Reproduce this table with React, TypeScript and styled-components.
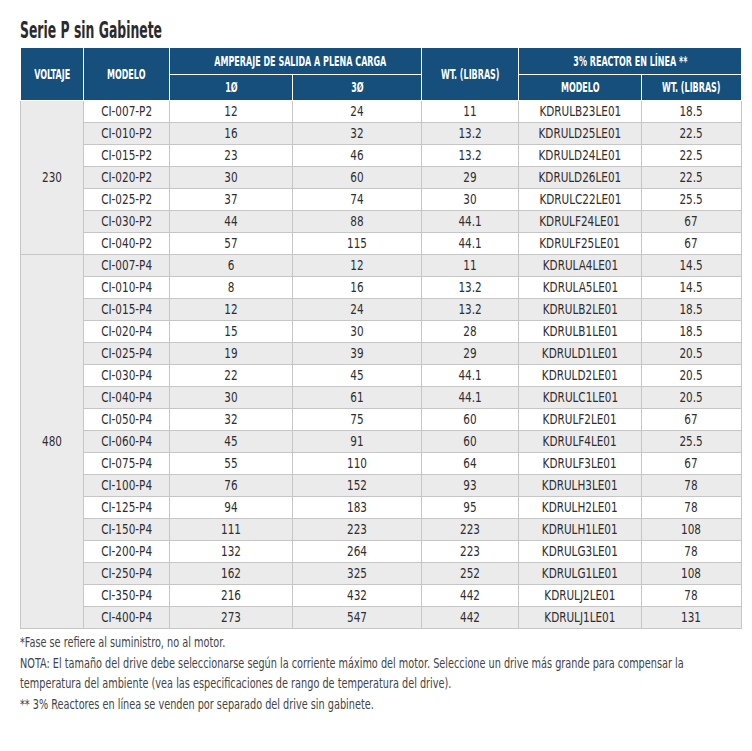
import React from "react";
import styled, { createGlobalStyle } from "styled-components";

const Global = createGlobalStyle`
  html, body { margin: 0; padding: 0; background: #ffffff; }
  body { font-family: "Liberation Sans Narrow", "DejaVu Sans Condensed", "Liberation Sans", sans-serif; color: #333333; }
`;

const Page = styled.div`
  padding: 18px 11px 0 20px;
  width: 721px;
  overflow: hidden;
`;

const Title = styled.h1`
  margin: 0 0 5px 0;
  font-size: 23px;
  line-height: 25px;
  font-weight: 700;
  color: #2b2b2b;
  white-space: nowrap;
`;

/* condensed rendering of the text: the reference uses a narrow face */
const Squeeze = styled.span<{ $x: number; $origin?: string }>`
  display: inline-block;
  white-space: nowrap;
  transform: scaleX(${(p) => p.$x});
  transform-origin: ${(p) => p.$origin ?? "center"};
`;

const Table = styled.table`
  width: 721px;
  border-collapse: collapse;
  table-layout: fixed;
`;

const Th = styled.th`
  background: #164f7b;
  color: #ffffff;
  font-size: 13.5px;
  font-weight: 700;
  height: 26px;
  padding: 0;
  border: 1px solid #ffffff;
  border-top: none;
  text-align: center;
  vertical-align: middle;
  box-sizing: border-box;
  white-space: nowrap;
  &:first-child { border-left: none; }
`;

const Row = styled.tr<{ $shade: boolean }>`
  height: 22px;
  background: ${(p) => (p.$shade ? "#ebebeb" : "#ffffff")};
`;

const Td = styled.td`
  font-size: 14px;
  color: #2e2e2e;
  text-align: center;
  vertical-align: middle;
  padding: 0;
  border: 1px solid #c6c6c6;
  box-sizing: border-box;
  white-space: nowrap;
`;

const VoltCell = styled(Td)`
  background: #ebebeb;
`;

const Notes = styled.div`
  margin-top: 3px;
  width: 852px;
  font-size: 13.5px;
  line-height: 20px;
  color: #444444;
  transform: scaleX(0.8);
  transform-origin: left top;
`;

const Note = styled.p`
  margin: 0 0 1px 0;
`;

type R = [string, string, string, string, string, string];

const g230: R[] = [
  ["CI-007-P2", "12", "24", "11", "KDRULB23LE01", "18.5"],
  ["CI-010-P2", "16", "32", "13.2", "KDRULD25LE01", "22.5"],
  ["CI-015-P2", "23", "46", "13.2", "KDRULD24LE01", "22.5"],
  ["CI-020-P2", "30", "60", "29", "KDRULD26LE01", "22.5"],
  ["CI-025-P2", "37", "74", "30", "KDRULC22LE01", "25.5"],
  ["CI-030-P2", "44", "88", "44.1", "KDRULF24LE01", "67"],
  ["CI-040-P2", "57", "115", "44.1", "KDRULF25LE01", "67"],
];

const g480: R[] = [
  ["CI-007-P4", "6", "12", "11", "KDRULA4LE01", "14.5"],
  ["CI-010-P4", "8", "16", "13.2", "KDRULA5LE01", "14.5"],
  ["CI-015-P4", "12", "24", "13.2", "KDRULB2LE01", "18.5"],
  ["CI-020-P4", "15", "30", "28", "KDRULB1LE01", "18.5"],
  ["CI-025-P4", "19", "39", "29", "KDRULD1LE01", "20.5"],
  ["CI-030-P4", "22", "45", "44.1", "KDRULD2LE01", "20.5"],
  ["CI-040-P4", "30", "61", "44.1", "KDRULC1LE01", "20.5"],
  ["CI-050-P4", "32", "75", "60", "KDRULF2LE01", "67"],
  ["CI-060-P4", "45", "91", "60", "KDRULF4LE01", "25.5"],
  ["CI-075-P4", "55", "110", "64", "KDRULF3LE01", "67"],
  ["CI-100-P4", "76", "152", "93", "KDRULH3LE01", "78"],
  ["CI-125-P4", "94", "183", "95", "KDRULH2LE01", "78"],
  ["CI-150-P4", "111", "223", "223", "KDRULH1LE01", "108"],
  ["CI-200-P4", "132", "264", "223", "KDRULG3LE01", "78"],
  ["CI-250-P4", "162", "325", "252", "KDRULG1LE01", "108"],
  ["CI-350-P4", "216", "432", "442", "KDRULJ2LE01", "78"],
  ["CI-400-P4", "273", "547", "442", "KDRULJ1LE01", "131"],
];

const groups: { volt: string; rows: R[]; offset: number }[] = [
  { volt: "230", rows: g230, offset: 0 },
  { volt: "480", rows: g480, offset: g230.length },
];

const widths = [63, 86, 123, 129, 97, 123, 100];
const HX = 0.66;
const DX = 0.83;

export default function App() {
  return (
    <>
      <Global />
      <Page>
        <Title>
          <Squeeze $x={0.6} $origin="left center">Serie P sin Gabinete</Squeeze>
        </Title>
        <Table>
          <colgroup>
            {widths.map((w, i) => (
              <col key={i} style={{ width: w }} />
            ))}
          </colgroup>
          <thead>
            <tr>
              <Th rowSpan={2}><Squeeze $x={HX}>VOLTAJE</Squeeze></Th>
              <Th rowSpan={2}><Squeeze $x={HX}>MODELO</Squeeze></Th>
              <Th colSpan={2}><Squeeze $x={HX}>AMPERAJE DE SALIDA A PLENA CARGA</Squeeze></Th>
              <Th rowSpan={2}><Squeeze $x={HX}>WT. (LIBRAS)</Squeeze></Th>
              <Th colSpan={2}><Squeeze $x={HX}>3% REACTOR EN LÍNEA **</Squeeze></Th>
            </tr>
            <tr>
              <Th><Squeeze $x={HX}>1Ø</Squeeze></Th>
              <Th><Squeeze $x={HX}>3Ø</Squeeze></Th>
              <Th><Squeeze $x={HX}>MODELO</Squeeze></Th>
              <Th><Squeeze $x={HX}>WT. (LIBRAS)</Squeeze></Th>
            </tr>
          </thead>
          <tbody>
            {groups.map((g) =>
              g.rows.map((r, i) => (
                <Row key={r[0]} $shade={(g.offset + i) % 2 === 1}>
                  {i === 0 && (
                    <VoltCell rowSpan={g.rows.length}>
                      <Squeeze $x={DX}>{g.volt}</Squeeze>
                    </VoltCell>
                  )}
                  {r.map((c, j) => (
                    <Td key={j}>
                      <Squeeze $x={DX}>{c}</Squeeze>
                    </Td>
                  ))}
                </Row>
              ))
            )}
          </tbody>
        </Table>
        <Notes>
          <Note>*Fase se refiere al suministro, no al motor.</Note>
          <Note>
            NOTA: El tamaño del drive debe seleccionarse según la corriente máximo del motor. Seleccione un drive más grande para compensar la temperatura del ambiente (vea las especificaciones de rango de temperatura del drive).
          </Note>
          <Note>** 3% Reactores en línea se venden por separado del drive sin gabinete.</Note>
        </Notes>
      </Page>
    </>
  );
}
